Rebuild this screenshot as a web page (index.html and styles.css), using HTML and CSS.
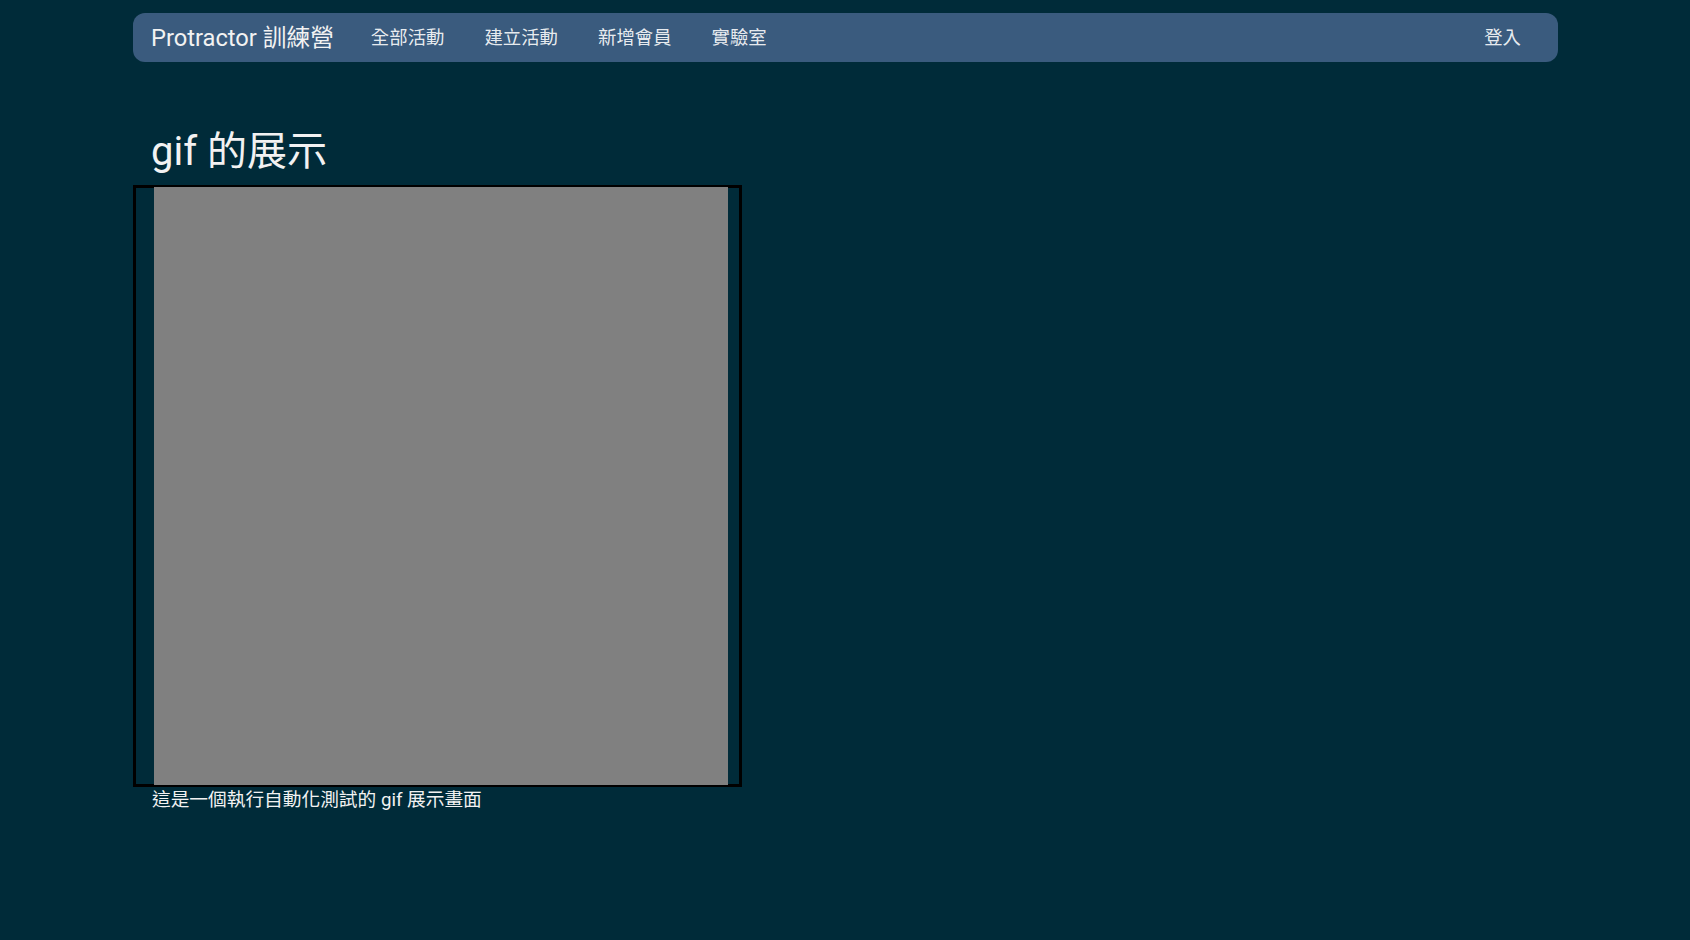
FILE: index.html
```html
<!DOCTYPE html>
<html lang="zh-Hant">
<head>
<meta charset="utf-8">
<title>Protractor 訓練營</title>
<link rel="stylesheet" href="styles.css">
</head>
<body>
<div class="page">
  <nav class="navbar">
    <a class="brand" href="#">Protractor 訓練營</a>
    <ul class="nav-links">
      <li><a href="#">全部活動</a></li>
      <li><a href="#">建立活動</a></li>
      <li><a href="#">新增會員</a></li>
      <li><a href="#">實驗室</a></li>
    </ul>
    <a class="login" href="#">登入</a>
  </nav>
  <main class="content">
    <h2 class="title">gif 的展示</h2>
    <div class="gif-frame">
      <div class="gif"></div>
    </div>
    <p class="caption">這是一個執行自動化測試的 gif 展示畫面</p>
  </main>
</div>
</body>
</html>
```

FILE: styles.css
```css
html, body {
  margin: 0;
  padding: 0;
  background: #002b39;
  color: #ffffff;
  font-family: Roboto, "Noto Sans CJK TC", sans-serif;
}

.page {
  padding: 13px 132px 0 133px;
}

.navbar {
  display: flex;
  align-items: center;
  height: 49px;
  background: #3a5b7e;
  border-radius: 12px;
  padding: 2px 37px 0 18px;
  box-sizing: border-box;
}

.brand {
  color: #f2f2f2;
  text-decoration: none;
  font-size: 23.7px;
  line-height: 1;
  margin-right: 17px;
}

.nav-links {
  display: flex;
  list-style: none;
  margin: 0;
  padding: 0;
  flex: 1;
}

.nav-links a,
.login {
  display: block;
  color: rgba(255, 255, 255, 0.9);
  text-decoration: none;
  font-size: 18.4px;
  line-height: 1;
  padding: 0 20px;
}

.login {
  padding: 0;
}

.content {
  padding-top: 66px;
}

.title {
  margin: 0 0 10px;
  padding-left: 18px;
  font-weight: 400;
  font-size: 40px;
  line-height: 47px;
  color: #f2f2f2;
}

.gif-frame {
  width: 574px;
  height: 596px;
  border: 3px solid #000;
  padding: 0 11px 0 18px;
  display: flex;
}

.gif {
  flex: 1;
  background: #808080;
  margin: -1px 0;
}

.caption {
  margin: 0;
  padding-left: 19px;
  font-size: 18.7px;
  line-height: 27px;
  color: #f2f2f2;
}
```
